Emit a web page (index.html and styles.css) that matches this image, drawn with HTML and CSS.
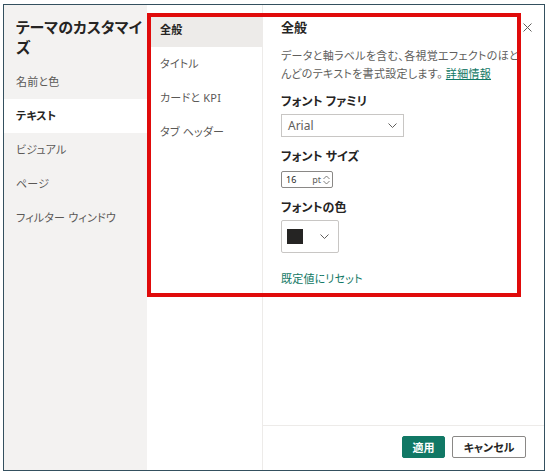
FILE: index.html
```html
<!DOCTYPE html>
<html lang="ja">
<head>
<meta charset="utf-8">
<link rel="stylesheet" href="styles.css">
</head>
<body>
<div class="frame">
  <aside class="sidebar">
    <h1 class="title">テーマのカスタマイ<br>ズ</h1>
    <ul class="nav">
      <li class="nav-item">名前と色</li>
      <li class="nav-item active">テキスト</li>
      <li class="nav-item">ビジュアル</li>
      <li class="nav-item">ページ</li>
      <li class="nav-item">フィルター ウィンドウ</li>
    </ul>
  </aside>
  <nav class="subnav">
    <div class="sub-item active">全般</div>
    <div class="sub-item">タイトル</div>
    <div class="sub-item">カードと KPI</div>
    <div class="sub-item">タブ ヘッダー</div>
  </nav>
  <main class="main">
    <div class="main-body">
      <div class="header">
        <h2 class="heading">全般</h2>
        <svg class="close" width="9" height="9" viewBox="0 0 9 9"><path d="M0.5 0.5 L8.5 8.5 M8.5 0.5 L0.5 8.5" stroke="#605e5c" stroke-width="1" fill="none"/></svg>
      </div>
      <p class="desc">データと軸ラベルを含む、各視覚エフェクトのほと<br>んどのテキストを書式設定します。<a class="link" href="#">詳細情報</a></p>
      <div class="label lbl-family">フォント ファミリ</div>
      <div class="select">
        <span class="select-text">Arial</span>
        <svg width="9" height="5" viewBox="0 0 9 5"><path d="M0.5 0.5 L4.5 4.5 L8.5 0.5" fill="none" stroke="#605e5c" stroke-width="1"/></svg>
      </div>
      <div class="label lbl-size">フォント サイズ</div>
      <div class="spin">
        <span class="spin-val">16</span>
        <span class="spin-unit">pt</span>
        <span class="spin-arrows">
          <svg width="7" height="5" viewBox="0 0 7 5"><path d="M0.5 4 L3.5 1 L6.5 4" fill="none" stroke="#605e5c" stroke-width="0.8"/></svg>
          <svg width="7" height="5" viewBox="0 0 7 5"><path d="M0.5 1 L3.5 4 L6.5 1" fill="none" stroke="#605e5c" stroke-width="0.8"/></svg>
        </span>
      </div>
      <div class="label lbl-color">フォントの色</div>
      <div class="color-btn">
        <span class="swatch"></span>
        <svg width="9" height="5" viewBox="0 0 9 5"><path d="M0.5 0.5 L4.5 4.5 L8.5 0.5" fill="none" stroke="#605e5c" stroke-width="1"/></svg>
      </div>
      <a class="reset" href="#">既定値にリセット</a>
    </div>
    <footer class="footer">
      <button class="btn primary">適用</button>
      <button class="btn secondary">キャンセル</button>
    </footer>
  </main>
  <div class="annotation"></div>
</div>
</body>
</html>
```
FILE: styles.css
```css
* { box-sizing: border-box; }
html, body { margin: 0; padding: 0; background: #ffffff; }
body {
  font-family: "Noto Sans", "Noto Sans CJK JP", sans-serif;
  font-feature-settings: "palt" 1;
  color: #252423;
}
.frame {
  position: relative;
  margin: 4px 0 0 3px;
  width: 542px;
  height: 467px;
  border: 1px solid #34505f;
  display: flex;
  overflow: hidden;
}
.sidebar {
  width: 143px;
  flex: none;
  background: #f3f2f1;
  padding-top: 12px;
}
.title {
  margin: 0;
  padding-left: 12px;
  font-size: 15px;
  line-height: 20px;
  font-weight: 700;
  color: #252423;
  white-space: nowrap;
}
.nav {
  list-style: none;
  margin: 8px 0 0;
  padding: 0;
}
.nav-item {
  height: 34px;
  line-height: 34px;
  padding-left: 12px;
  font-size: 11px;
  letter-spacing: 0.2px;
  color: #5a5856;
  white-space: nowrap;
}
.nav-item.active {
  background: #ffffff;
  color: #252423;
  font-weight: 700;
}
.subnav {
  width: 116px;
  flex: none;
  background: #ffffff;
  border-right: 1px solid #edebe9;
  padding-top: 8px;
}
.sub-item {
  height: 34px;
  line-height: 34px;
  padding-left: 13px;
  font-size: 11px;
  letter-spacing: 0.2px;
  color: #5a5856;
  white-space: nowrap;
}
.sub-item.active {
  background: #edebe9;
  color: #252423;
  font-weight: 700;
}
.main {
  flex: 1;
  display: flex;
  flex-direction: column;
}
.main-body {
  flex: 1;
  padding: 13px 24px 0 18px;
  display: flex;
  flex-direction: column;
  align-items: flex-start;
}
.header {
  align-self: stretch;
  display: flex;
  justify-content: space-between;
  align-items: center;
}
.heading {
  margin: 0;
  font-size: 13px;
  line-height: 18px;
  font-weight: 700;
}
.close { margin-right: -12px; }
.desc {
  margin: 11px 0 0;
  font-size: 11px;
  line-height: 18px;
  letter-spacing: 0.3px;
  color: #605e5c;
  white-space: nowrap;
}
.link {
  color: #117865;
  text-decoration: underline;
  margin-left: 3px;
}
.label {
  font-size: 12px;
  line-height: 18px;
  font-weight: 700;
  color: #252423;
}
.lbl-family { margin-top: 10px; }
.lbl-size { margin-top: 11px; }
.lbl-color { margin-top: 11px; }
.select {
  margin-top: 3px;
  width: 123px;
  height: 23px;
  border: 1px solid #c8c6c4;
  display: flex;
  align-items: center;
  justify-content: space-between;
  padding: 0 6px;
}
.select-text {
  font-size: 12px;
  color: #605e5c;
}
.spin {
  margin-top: 5px;
  width: 52px;
  height: 17px;
  border: 1px solid #8a8886;
  border-radius: 2px;
  display: flex;
  align-items: center;
  padding: 0 2px 0 4px;
  font-size: 9px;
  color: #252423;
}
.spin-val { flex: 1; }
.spin-unit { margin-right: 2px; color: #605e5c; }
.spin-arrows {
  display: flex;
  flex-direction: column;
  gap: 0;
}
.spin-arrows svg { display: block; }
.color-btn {
  margin-top: 3px;
  width: 58px;
  height: 33px;
  border: 1px solid #c8c6c4;
  border-radius: 2px;
  display: flex;
  align-items: center;
  justify-content: space-between;
  padding: 0 9px 0 5px;
}
.swatch {
  width: 16px;
  height: 15px;
  background: #252423;
}
.reset {
  margin-top: 17px;
  font-size: 11px;
  line-height: 18px;
  letter-spacing: 0.2px;
  color: #117865;
  text-decoration: none;
}
.footer {
  height: 45px;
  border-top: 1px solid #edebe9;
  display: flex;
  justify-content: flex-end;
  align-items: flex-start;
  gap: 7px;
  padding: 10px 18px 0 0;
}
.btn {
  height: 22px;
  font-family: inherit;
  font-feature-settings: "palt" 1;
  font-size: 11px;
  font-weight: 700;
  border-radius: 2px;
  padding: 0;
  cursor: pointer;
}
.btn.primary {
  width: 43px;
  background: #117865;
  border: 1px solid #117865;
  color: #ffffff;
}
.btn.secondary {
  width: 74px;
  background: #ffffff;
  border: 1px solid #8a8886;
  color: #252423;
}
.annotation {
  position: absolute;
  left: 143px;
  top: 8px;
  width: 374px;
  height: 284px;
  border: 4px solid #e00b0b;
  pointer-events: none;
}
```
